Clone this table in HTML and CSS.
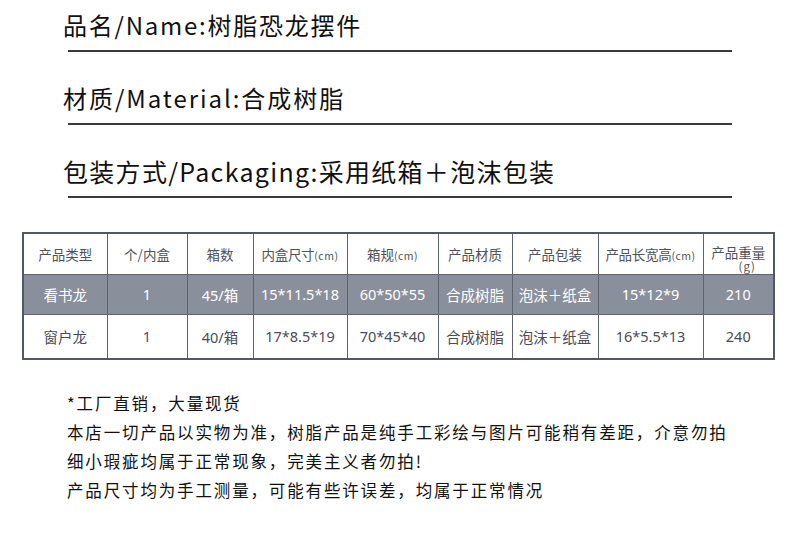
FILE: index.html
```html
<!DOCTYPE html>
<html lang="zh-CN">
<head>
<meta charset="utf-8">
<title>树脂恐龙摆件</title>
<link rel="stylesheet" href="styles.css">
</head>
<body>
<div class="page">
  <section class="specs">
    <div class="spec">
      <div class="spec-text s1">品名/Name:树脂恐龙摆件</div>
      <div class="rule"></div>
    </div>
    <div class="spec">
      <div class="spec-text s2">材质/Material:合成树脂</div>
      <div class="rule"></div>
    </div>
    <div class="spec">
      <div class="spec-text s3">包装方式/Packaging:采用纸箱＋泡沫包装</div>
      <div class="rule"></div>
    </div>
  </section>

  <table class="grid">
    <colgroup>
      <col class="c1"><col class="c2"><col class="c3"><col class="c4"><col class="c5">
      <col class="c6"><col class="c7"><col class="c8"><col class="c9">
    </colgroup>
    <tr class="head">
      <td>产品类型</td>
      <td>个/内盒</td>
      <td>箱数</td>
      <td class="tight">内盒尺寸<span class="unit">(cm)</span></td>
      <td>箱规<span class="unit">(cm)</span></td>
      <td>产品材质</td>
      <td>产品包装</td>
      <td class="tight">产品长宽高<span class="unit">(cm)</span></td>
      <td class="weight"><span class="wl">产品重量</span><span class="wg">(g)</span></td>
    </tr>
    <tr class="dark">
      <td>看书龙</td>
      <td>1</td>
      <td>45/箱</td>
      <td>15*11.5*18</td>
      <td>60*50*55</td>
      <td>合成树脂</td>
      <td>泡沫＋纸盒</td>
      <td>15*12*9</td>
      <td>210</td>
    </tr>
    <tr class="light">
      <td>窗户龙</td>
      <td>1</td>
      <td>40/箱</td>
      <td>17*8.5*19</td>
      <td>70*45*40</td>
      <td>合成树脂</td>
      <td>泡沫＋纸盒</td>
      <td>16*5.5*13</td>
      <td>240</td>
    </tr>
  </table>

  <section class="notes">
    <p>*工厂直销，大量现货</p>
    <p>本店一切产品以实物为准，树脂产品是纯手工彩绘与图片可能稍有差距，介意勿拍</p>
    <p>细小瑕疵均属于正常现象，完美主义者勿拍!</p>
    <p>产品尺寸均为手工测量，可能有些许误差，均属于正常情况</p>
  </section>
</div>
</body>
</html>
```

FILE: styles.css
```css
html, body {
  margin: 0;
  padding: 0;
  background: #ffffff;
}

.page {
  width: 790px;
  height: 553px;
  padding-top: 7px;
  box-sizing: border-box;
  font-family: "Noto Sans CJK SC", "Noto Sans", sans-serif;
  color: #111;
}

.specs {
  display: flex;
  flex-direction: column;
  gap: 28px;
}

.spec {
  display: flex;
  flex-direction: column;
}

.spec-text {
  padding-left: 63px;
  height: 36px;
  line-height: 36px;
  font-size: 24px;
  margin-bottom: 7px;
  color: #111;
  white-space: nowrap;
}

.s1 { letter-spacing: 1.75px; }
.s2 { letter-spacing: 1.95px; }
.s3 { font-size: 25px; letter-spacing: 1.3px; }

.rule {
  margin-left: 68px;
  width: 664px;
  height: 2px;
  background: #3a3a3a;
}

.grid {
  margin: 34px 0 0 22px;
  width: 753px;
  border-collapse: collapse;
  table-layout: fixed;
  border: 2px solid #545866;
  font-family: "Noto Sans", "Noto Sans CJK SC", sans-serif;
  font-size: 14px;
  color: #4a4d55;
}

.c1 { width: 84px; }
.c2 { width: 80px; }
.c3 { width: 66px; }
.c4 { width: 94px; }
.c5 { width: 91px; }
.c6 { width: 74px; }
.c7 { width: 86px; }
.c8 { width: 105px; }
.c9 { width: 71px; }

.grid td {
  border: 1px solid #5f6370;
  text-align: center;
  padding: 0;
  white-space: nowrap;
}

.grid .tight {
  letter-spacing: -0.3px;
}

.head {
  height: 41px;
}

.head td {
  font-family: "Noto Sans CJK SC", sans-serif;
  font-size: 13.5px;
  color: #4f525a;
}

.unit {
  font-size: 10.5px;
  letter-spacing: 0.5px;
}

.head .weight {
  padding-top: 11px;
}

.wl {
  display: block;
  line-height: 14px;
}

.wg {
  display: block;
  line-height: 14px;
  font-size: 11.5px;
  letter-spacing: 1px;
  padding-left: 18px;
}

.dark {
  height: 40px;
}

.dark td {
  background: #8a8f9c;
  color: #ffffff;
  font-size: 14.5px;
}

.light {
  height: 45px;
}

.light td {
  background: #ffffff;
  color: #4a4d55;
  font-size: 14.5px;
}

.notes {
  margin-top: 29px;
  padding-left: 67px;
  font-size: 16.5px;
  letter-spacing: 1.85px;
  color: #111;
}

.notes p {
  margin: 0;
  height: 29px;
  line-height: 29px;
  white-space: nowrap;
}
```
